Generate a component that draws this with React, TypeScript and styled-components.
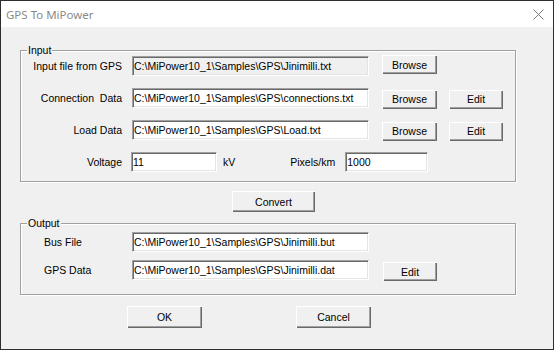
import styled, { createGlobalStyle } from 'styled-components'

const GlobalStyle = createGlobalStyle`
    html, body {
        margin: 0;
        padding: 0;
        background: #f0f0f0;
    }
    #root {
        width: 554px;
        height: 350px;
    }
`

const font = `"Liberation Sans", Arial, sans-serif`

const Window = styled.div`
    width: 554px;
    height: 350px;
    box-sizing: border-box;
    border: 1px solid #2e2e2e;
    display: flex;
    flex-direction: column;
    font-family: ${font};
    font-size: 10.5px;
    color: #000;
`

const TitleBar = styled.div`
    height: 26px;
    flex: none;
    background: #fff;
    display: flex;
    align-items: center;
    justify-content: space-between;
    padding: 0 9px 0 5px;
`

const Title = styled.span`
    font-family: "Noto Sans", ${font};
    font-size: 11.5px;
    color: #8a8a8a;
`

const Body = styled.div`
    flex: 1;
    background: #f0f0f0;
    padding: 23px 0 0 19px;
    display: flex;
    flex-direction: column;
    align-items: flex-start;
`

const GroupBox = styled.div<{ $pt: number; $pb: number; $gap: number }>`
    position: relative;
    width: 496px;
    box-sizing: border-box;
    border: 1px solid #a0a0a0;
    box-shadow: inset 1px 1px 0 #fff, 1px 1px 0 #fff;
    padding: ${(p) => p.$pt}px 0 ${(p) => p.$pb}px 0;
    display: flex;
    flex-direction: column;
    gap: ${(p) => p.$gap}px;
`

const Legend = styled.span`
    position: absolute;
    top: -7px;
    left: 6px;
    padding: 0 1px;
    background: #f0f0f0;
    line-height: 13px;
`

const Row = styled.div`
    display: flex;
    align-items: center;
    height: 20px;
`

const Label = styled.span<{ $left?: boolean; $mr?: number }>`
    width: 101px;
    box-sizing: border-box;
    text-align: ${(p) => (p.$left ? 'left' : 'right')};
    padding-left: ${(p) => (p.$left ? 23 : 0)}px;
    margin-right: ${(p) => p.$mr ?? 10}px;
    white-space: pre;
`

const Unit = styled.span<{ $ml: number }>`
    margin-left: ${(p) => p.$ml}px;
    white-space: pre;
`

const Field = styled.input<{ $w: number; $ml?: number; $disabled?: boolean }>`
    width: ${(p) => p.$w}px;
    height: 20px;
    box-sizing: border-box;
    margin: 0 0 0 ${(p) => p.$ml ?? 0}px;
    padding: 0 1px;
    font-family: ${font};
    font-size: 10.5px;
    color: #000;
    background: ${(p) => (p.$disabled ? '#f0f0f0' : '#fff')};
    border-style: solid;
    border-width: 1px;
    border-color: #a0a0a0 #fff #fff #a0a0a0;
    box-shadow: inset 1px 1px 0 #696969, inset -1px -1px 0 #e3e3e3;
    outline: none;
`

const Button = styled.button<{ $w: number; $h?: number; $ml?: number; $dy?: number }>`
    width: ${(p) => p.$w}px;
    height: ${(p) => p.$h ?? 19}px;
    margin: ${(p) => p.$dy ?? 0}px 0 0 ${(p) => p.$ml ?? 0}px;
    padding: 0;
    font-family: ${font};
    font-size: 10.5px;
    color: #000;
    background: #f0f0f0;
    border: none;
    box-shadow: inset 1px 1px 0 #fff, inset -1px -1px 0 #696969, inset -2px -2px 0 #a0a0a0;
    align-self: center;
`

const ConvertRow = styled.div`
    margin: 9px 0 11px 212px;
`

const Footer = styled.div`
    display: flex;
    gap: 94px;
    margin: 11px 0 0 107px;
`

const CloseIcon = () => (
    <svg width="11" height="11" viewBox="0 0 11 11">
        <path d="M0.5 0.5 L10.5 10.5 M10.5 0.5 L0.5 10.5" stroke="#7a7a7a" strokeWidth="1" fill="none" />
    </svg>
)

const base = 'C:\\MiPower10_1\\Samples\\GPS\\'

export default function App() {
    return (
        <>
            <GlobalStyle />
            <Window>
                <TitleBar>
                    <Title>GPS To MiPower</Title>
                    <CloseIcon />
                </TitleBar>
                <Body>
                    <GroupBox $pt={5} $pb={9} $gap={12}>
                        <Legend>Input</Legend>
                        <Row>
                            <Label>Input file from GPS</Label>
                            <Field $w={237} $disabled readOnly defaultValue={base + 'Jinimilli.txt'} />
                            <Button $w={55} $ml={13} $dy={-3}>Browse</Button>
                        </Row>
                        <Row>
                            <Label>{'Connection  Data'}</Label>
                            <Field $w={237} readOnly defaultValue={base + 'connections.txt'} />
                            <Button $w={55} $ml={13} $dy={2}>Browse</Button>
                            <Button $w={54} $ml={12} $dy={2}>Edit</Button>
                        </Row>
                        <Row>
                            <Label>Load Data</Label>
                            <Field $w={237} readOnly defaultValue={base + 'Load.txt'} />
                            <Button $w={55} $ml={13} $dy={2}>Browse</Button>
                            <Button $w={54} $ml={12} $dy={2}>Edit</Button>
                        </Row>
                        <Row>
                            <Label $mr={9}>Voltage</Label>
                            <Field $w={86} readOnly defaultValue="11" />
                            <Unit $ml={6}>kV</Unit>
                            <Unit $ml={55}>Pixels/km</Unit>
                            <Field $w={83} $ml={10} readOnly defaultValue="1000" />
                        </Row>
                    </GroupBox>
                    <ConvertRow>
                        <Button $w={83} $h={21}>Convert</Button>
                    </ConvertRow>
                    <GroupBox $pt={8} $pb={14} $gap={8}>
                        <Legend>Output</Legend>
                        <Row>
                            <Label $left>Bus File</Label>
                            <Field $w={237} readOnly defaultValue={base + 'Jinimilli.but'} />
                        </Row>
                        <Row>
                            <Label $left>GPS Data</Label>
                            <Field $w={237} readOnly defaultValue={base + 'Jinimilli.dat'} />
                            <Button $w={54} $ml={14} $dy={3}>Edit</Button>
                        </Row>
                    </GroupBox>
                    <Footer>
                        <Button $w={75} $h={22}>OK</Button>
                        <Button $w={75} $h={22}>Cancel</Button>
                    </Footer>
                </Body>
            </Window>
        </>
    )
}
